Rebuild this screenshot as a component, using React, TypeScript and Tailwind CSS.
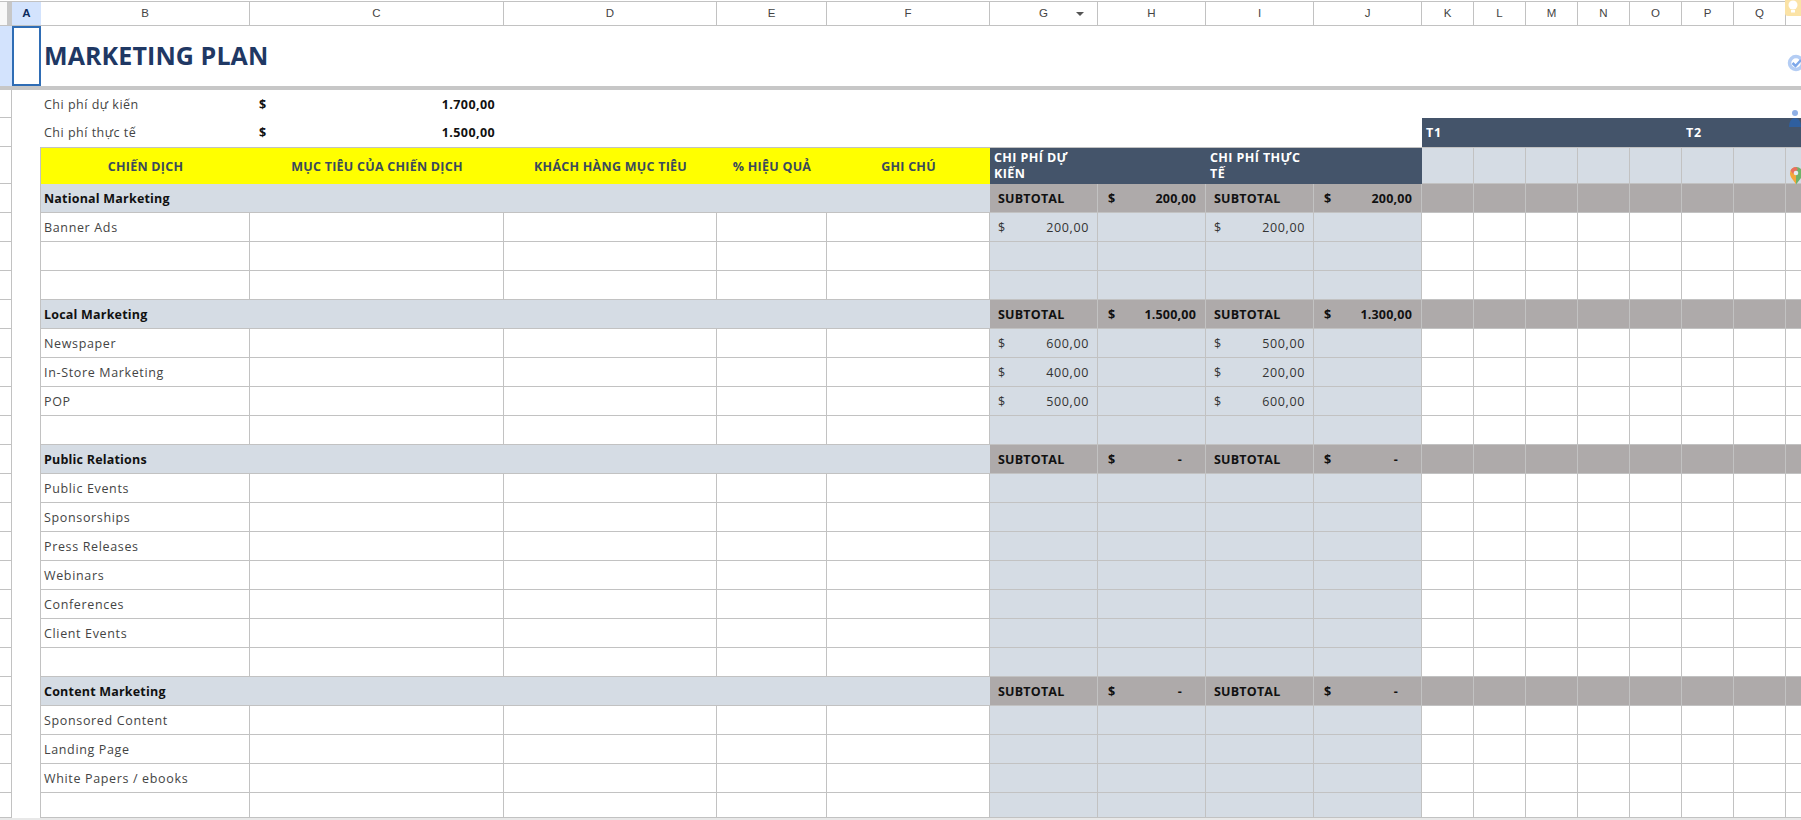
import React from 'react'

const line = 'border-r border-b border-[#c2c2c2]'
const grid = 'grid grid-cols-[12px_29px_209px_254px_213px_110px_163px_108px_108px_108px_108px_52px_52px_52px_52px_52px_52px_52px_52px]'
const letters = ['B', 'C', 'D', 'E', 'F', 'G', 'H', 'I', 'J', 'K', 'L', 'M', 'N', 'O', 'P', 'Q']
const months = [0, 1, 2, 3, 4, 5, 6, 7]

type Row =
  | { kind: 'group'; name: string; plan: string; actual: string }
  | { kind: 'item'; name?: string; plan?: string; actual?: string }

const rows: Row[] = [
  { kind: 'group', name: 'National Marketing', plan: '200,00', actual: '200,00' },
  { kind: 'item', name: 'Banner Ads', plan: '200,00', actual: '200,00' },
  { kind: 'item' },
  { kind: 'item' },
  { kind: 'group', name: 'Local Marketing', plan: '1.500,00', actual: '1.300,00' },
  { kind: 'item', name: 'Newspaper', plan: '600,00', actual: '500,00' },
  { kind: 'item', name: 'In-Store Marketing', plan: '400,00', actual: '200,00' },
  { kind: 'item', name: 'POP', plan: '500,00', actual: '600,00' },
  { kind: 'item' },
  { kind: 'group', name: 'Public Relations', plan: '-', actual: '-' },
  { kind: 'item', name: 'Public Events' },
  { kind: 'item', name: 'Sponsorships' },
  { kind: 'item', name: 'Press Releases' },
  { kind: 'item', name: 'Webinars' },
  { kind: 'item', name: 'Conferences' },
  { kind: 'item', name: 'Client Events' },
  { kind: 'item' },
  { kind: 'group', name: 'Content Marketing', plan: '-', actual: '-' },
  { kind: 'item', name: 'Sponsored Content' },
  { kind: 'item', name: 'Landing Page' },
  { kind: 'item', name: 'White Papers / ebooks' },
  { kind: 'item' },
]

const Gutter = () => <div className="border-r border-b border-[#c2c2c2] bg-white" />
const ColA = () => <div className="border-r border-[#c2c2c2] bg-white" />

const Money = ({ value }: { value?: string }) => {
  if (!value) return <div className={`${line} bg-[#d5dce4]`} />
  return (
    <div className={`${line} bg-[#d5dce4] flex items-center justify-between pt-[2px] pl-[8px] pr-[8px] text-[#333]`}>
      <span>$</span>
      <span>{value}</span>
    </div>
  )
}

const Subtotal = ({ value }: { value: string }) => (
  <>
    <div className="border-r border-b border-[#c2c2c2] bg-[#aeaaaa] flex items-center pt-[2px] pl-[8px] font-bold tracking-[0.2px] text-[#111]">SUBTOTAL</div>
    <div className="border-r border-b border-[#c2c2c2] bg-[#aeaaaa] flex items-center justify-between pt-[2px] pl-[10px] pr-[9px] font-bold tracking-[0.2px] text-[#111]">
      <span>$</span>
      <span className={value === '-' ? 'pr-[14px]' : ''}>{value}</span>
    </div>
  </>
)

const SideIcons = () => (
  <>
    <div className="absolute right-0 top-0 w-[16px] h-[16px] rounded-bl-[3px] bg-[#fbe3a6] flex justify-center">
      <svg width="10" height="14" viewBox="0 0 10 14"><circle cx="5" cy="5" r="4.5" fill="#fff" /><rect x="3" y="10" width="4" height="2.5" fill="#fff" /></svg>
    </div>
    <svg className="absolute right-0 top-[54px]" width="14" height="18" viewBox="0 0 14 18">
      <circle cx="9" cy="9" r="6.500" fill="none" stroke="#b4cdf4" strokeWidth="3.500" />
      <path d="M5.500 9l3 3 5.500-6" fill="none" stroke="#7ea8ea" strokeWidth="2.500" />
    </svg>
    <svg className="absolute right-0 top-[110px]" width="13" height="18" viewBox="0 0 13 18">
      <circle cx="7" cy="3" r="3" fill="#8fb0e6" />
      <path d="M1 17c0-5 2-9 6-9s6 4 6 9z" fill="#2f5f9f" />
    </svg>
    <svg className="absolute right-0 top-[166px]" width="12" height="19" viewBox="0 0 12 19">
      <path d="M7 1a6.500 6.500 0 0 0-6 6.500c0 4 4 7 6 11z" fill="#f3a83b" />
      <path d="M7 1a6.500 6.500 0 0 1 5 2v9l-5 6.500z" fill="#6fb36a" />
      <path d="M1.500 4.500a6.500 6.500 0 0 1 5.500-3.500l2 2-5 5z" fill="#e8705f" />
      <circle cx="7" cy="7" r="2.300" fill="#e6eaf0" />
    </svg>
  </>
)

export default function App() {
  return (
    <div className="relative w-[1801px] h-[820px] overflow-hidden bg-white text-[12.500px] text-[#444] font-['Open_Sans',sans-serif] tracking-[0.65px]">
      {/* column letters */}
      <div className={`${grid} h-[25px] mt-px border-t border-b border-[#c2c2c2] font-['Liberation_Sans',sans-serif] text-[11.500px] tracking-normal text-[#444]`}>
        <div className="bg-[linear-gradient(to_right,#f8f8f8_7px,#c7c7c7_7px)]" />
        <div className="bg-[#d3e3fd] font-bold text-[#0b2a5c] flex items-center justify-center">A</div>
        {letters.map((l) => (
          <div key={l} className="relative border-r border-[#c2c2c2] flex items-center justify-center">
            {l}
            {l === 'G' && <span className="absolute right-[13px] top-[10px] w-0 h-0 border-x-[4px] border-t-[4px] border-x-transparent border-t-[#555]" />}
          </div>
        ))}
      </div>

      {/* title */}
      <div className={`${grid} h-[60px]`}>
        <div className="bg-[#d3e3fd]" />
        <div className="border-2 border-[#2f6db5] bg-white" />
        <h1 className="col-span-17 flex items-center pl-[3px] text-[25px] font-bold text-[#1f3864] tracking-[0.1px]">MARKETING PLAN</h1>
      </div>
      <div className="h-[4px] bg-[#c7c7c7]" />

      {/* totals */}
      <div className={`${grid} h-[28px]`}>
        <Gutter />
        <div />
        <div className="flex items-center pt-[2px] pl-[3px] tracking-[0.5px]">Chi phí dự kiến</div>
        <div className="flex items-center justify-between pt-[2px] pl-[9px] pr-[9px] font-bold text-[#111] tracking-[0.4px]">
          <span>$</span>
          <span>1.700,00</span>
        </div>
      </div>
      <div className={`${grid} h-[29px]`}>
        <Gutter />
        <div />
        <div className="flex items-center pt-[2px] pl-[3px] tracking-[0.5px]">Chi phí thực tế</div>
        <div className="flex items-center justify-between pt-[2px] pl-[9px] pr-[9px] font-bold text-[#111] tracking-[0.4px]">
          <span>$</span>
          <span>1.500,00</span>
        </div>
        <div className="col-span-7" />
        <div className="col-span-5 bg-[#44546a] flex items-center pt-[2px] pl-[4px] font-bold text-white">T1</div>
        <div className="col-span-3 bg-[#44546a] flex items-center pt-[2px] pl-[4px] font-bold text-white">T2</div>
      </div>

      {/* table head */}
      <div className={`${grid} h-[37px]`}>
        <Gutter />
        <ColA />
        <div className="col-span-5 grid grid-cols-[209px_254px_213px_110px_163px] bg-[#ffff00] border-t border-[#c2c2c2] font-bold text-[#3b4a5c] tracking-[0.25px]">
          {['CHIẾN DỊCH', 'MỤC TIÊU CỦA CHIẾN DỊCH', 'KHÁCH HÀNG MỤC TIÊU', '% HIỆU QUẢ', 'GHI CHÚ'].map((h) => (
            <div key={h} className="flex items-center justify-center pt-[2px]">{h}</div>
          ))}
        </div>
        <div className="col-span-2 bg-[#44546a] border-t border-[#c2c2c2] pl-[4px] flex items-center font-bold text-white leading-[16px] tracking-[0.4px]">CHI PHÍ DỰ<br />KIẾN</div>
        <div className="col-span-2 bg-[#44546a] border-t border-[#c2c2c2] pl-[4px] flex items-center font-bold text-white leading-[16px] tracking-[0.4px]">CHI PHÍ THỰC<br />TẾ</div>
        {months.map((m) => (
          <div key={m} className={`${line} border-t bg-[#d5dce4]`} />
        ))}
      </div>

      {/* table body */}
      {rows.map((r, i) =>
        r.kind === 'group' ? (
          <div key={i} className={`${grid} h-[29px]`}>
            <Gutter />
            <ColA />
            <div className="col-span-5 border-b border-[#c2c2c2] bg-[#d5dce4] flex items-center pt-[2px] pl-[3px] font-bold text-[#111] tracking-[0.2px]">{r.name}</div>
            <Subtotal value={r.plan} />
            <Subtotal value={r.actual} />
            {months.map((m) => (
              <div key={m} className="border-r border-b border-[#c2c2c2] bg-[#aeaaaa]" />
            ))}
          </div>
        ) : (
          <div key={i} className={`${grid} ${i === rows.length - 1 ? 'h-[25px]' : 'h-[29px]'}`}>
            <Gutter />
            <ColA />
            <div className={`${line} flex items-center pt-[2px] pl-[3px]`}>{r.name}</div>
            <div className={line} />
            <div className={line} />
            <div className={line} />
            <div className={line} />
            <Money value={r.plan} />
            <Money />
            <Money value={r.actual} />
            <Money />
            {months.map((m) => (
              <div key={m} className={line} />
            ))}
          </div>
        )
      )}
      <div className="h-[2px] bg-[#e8e8e8]" />

      <SideIcons />
    </div>
  )
}
